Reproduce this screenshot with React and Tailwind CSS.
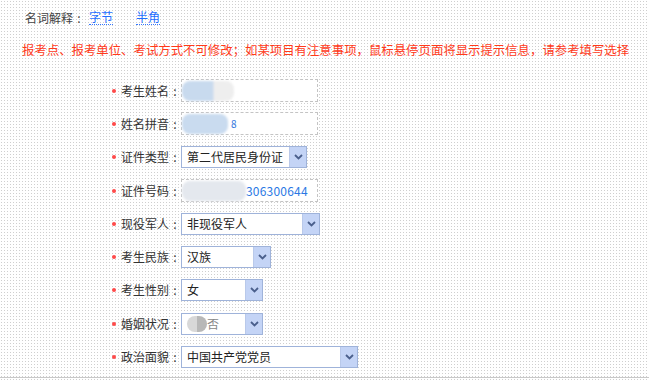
import React from "react";

const FONT = { fontFamily: '"Noto Sans CJK SC", "Noto Sans", sans-serif' };

function Arrow() {
  return (
    <div className="flex h-full w-[17px] items-center justify-center border-l border-[#b9c9ea] bg-[#c4d4f6]">
      <svg width="9" height="6" viewBox="0 0 9 6">
        <path d="M1 1 L4.5 4.5 L8 1" fill="none" stroke="#4a5f8c" strokeWidth="1.8" />
      </svg>
    </div>
  );
}

function Select({ w, children }) {
  return (
    <div className={`flex h-[22px] items-center border border-[#9fb3da] bg-white ${w}`}>
      <div className="flex flex-1 items-center pl-[5px] text-[12px] text-[#222]">{children}</div>
      <Arrow />
    </div>
  );
}

function Input({ children }) {
  return (
    <div className="flex h-[23px] w-[137px] items-center border border-dashed border-[#c4c4c4] bg-white">
      {children}
    </div>
  );
}

function Blob({ w, color = "#c9dbef" }) {
  return <div className={`h-[20px] rounded-[8px] blur-[1px] ${w}`} style={{ background: color }} />;
}

function Row({ label, children }) {
  return (
    <div className="flex h-[33.3px] items-center">
      <div className="flex w-[181px] items-center justify-end text-[12px] text-[#333]">
        <span className="mr-[5px] h-[4px] w-[4px] rounded-full bg-[#ff4a4a]" />
        <span>{label}</span>
        <span className="w-[12px] text-center">:</span>
      </div>
      {children}
    </div>
  );
}

export default function App() {
  return (
    <div
      className="relative h-[380px] w-[649px] overflow-hidden bg-white bg-[radial-gradient(circle,#cfcfcf_0.7px,transparent_0.9px)] bg-[length:3px_3px]"
      style={FONT}
    >
      <div className="flex h-[34px] items-center pl-[25px] pt-[1px] text-[12px]">
        <span className="text-[#444]">名词解释</span>
        <span className="w-[12px] text-center text-[#444]">:</span>
        <span className="ml-[4px] border-b border-dotted border-[#3377ff] leading-[14px] text-[#1f6fff]">字节</span>
        <span className="ml-[23px] border-b border-dotted border-[#3377ff] leading-[14px] text-[#1f6fff]">半角</span>
      </div>
      <div className="flex h-[32px] items-center pl-[22px] text-[12.4px] text-[#ff3a1a]">
        报考点、报考单位、考试方式不可修改；如某项目有注意事项，鼠标悬停页面将显示提示信息，请参考填写选择
      </div>
      <div className="pt-[8px]">
        <Row label="考生姓名">
          <Input>
            <Blob w="w-[52px]" color="linear-gradient(90deg,#c8daee 0%,#c8daee 60%,#eeeeee 61%,#eeeeee 100%)" />
          </Input>
        </Row>
        <Row label="姓名拼音">
          <Input>
            <Blob w="w-[46px]" />
            <span className="ml-[3px] text-[10px] text-[#3377dd]">8</span>
          </Input>
        </Row>
        <Row label="证件类型">
          <Select w="w-[126px]">第二代居民身份证</Select>
        </Row>
        <Row label="证件号码">
          <Input>
            <Blob w="w-[64px]" color="#e4e8ee" />
            <span className="text-[12px] tracking-[0.2px] text-[#2a78e4]">306300644</span>
          </Input>
        </Row>
        <Row label="现役军人">
          <Select w="w-[139px]">非现役军人</Select>
        </Row>
        <Row label="考生民族">
          <Select w="w-[90px]">汉族</Select>
        </Row>
        <Row label="考生性别">
          <Select w="w-[82px]">女</Select>
        </Row>
        <Row label="婚姻状况">
          <Select w="w-[82px]">
            <div className="h-[16px] w-[20px] rounded-[8px] bg-[linear-gradient(90deg,#d8d8d8_50%,#b8b8b8_50%)] blur-[0.5px]" />
            <span className="text-[#888]">否</span>
          </Select>
        </Row>
        <Row label="政治面貌">
          <Select w="w-[177px]">中国共产党党员</Select>
        </Row>
      </div>
      <div className="absolute bottom-[2px] left-0 h-px w-full bg-[#c8c8c8]" />
    </div>
  );
}
